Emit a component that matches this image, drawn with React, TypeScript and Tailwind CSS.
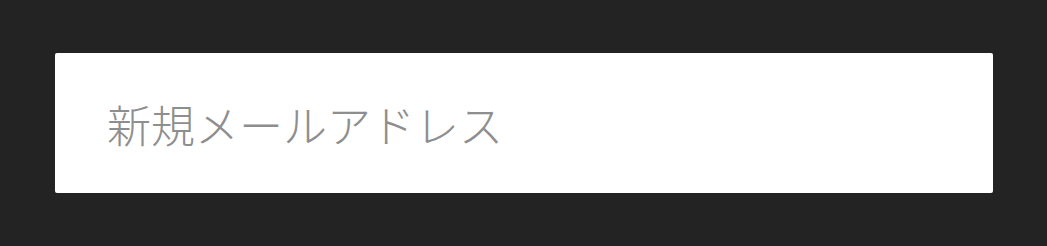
export default function App() {
  return (
    <div className="min-h-[246px] w-full bg-[#232323] pl-[55px] pr-[54px] pt-[53px] pb-[53px]">
      <input
        type="email"
        placeholder="新規メールアドレス"
        className="block h-[140px] w-full rounded-[2px] bg-white pl-[52px] pr-[52px] pt-[2px] text-[44px] font-light text-[#222] outline-none placeholder:text-[#8e8e8e] [font-family:'Noto_Sans_CJK_JP','Noto_Sans',sans-serif]"
      />
    </div>
  );
}
